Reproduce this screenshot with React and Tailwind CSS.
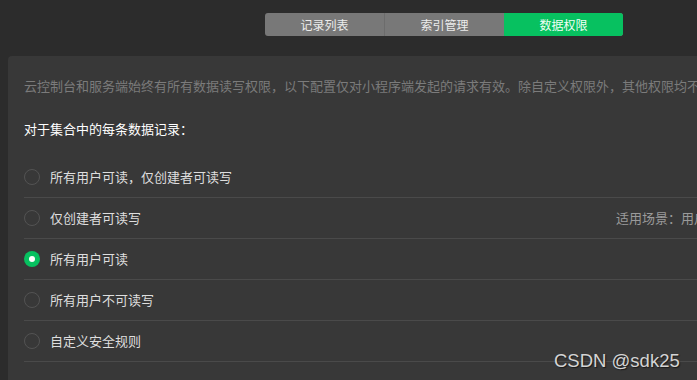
import React, { useState } from 'react';

const tabs = ['记录列表', '索引管理', '数据权限'];

const options = [
  { label: '所有用户可读，仅创建者可读写', hint: '' },
  { label: '仅创建者可读写', hint: '适用场景：用户个人设置、用户订单管理' },
  { label: '所有用户可读', hint: '' },
  { label: '所有用户不可读写', hint: '' },
  { label: '自定义安全规则', hint: '' },
];

const Radio = ({ checked }) =>
  checked ? (
    <span className="w-4 h-4 rounded-full bg-[#07c160] flex items-center justify-center">
      <span className="w-[6px] h-[6px] rounded-full bg-white"></span>
    </span>
  ) : (
    <span className="w-4 h-4 rounded-full border border-[#535353]"></span>
  );

const App = () => {
  const [activeTab, setActiveTab] = useState(2);
  const [selected, setSelected] = useState(2);

  return (
    <div
      className="relative w-[697px] h-[380px] overflow-hidden bg-[#2c2c2c]"
      style={{ fontFamily: '"Noto Sans CJK SC", "Liberation Sans", sans-serif' }}
    >
      {/* Tabs */}
      <div className="pt-[13px] pl-[265px] flex">
        <div className="flex w-[358px] h-[23px] rounded-[3px] overflow-hidden bg-[#787878]">
          {tabs.map((t, i) => (
            <button
              key={t}
              onClick={() => setActiveTab(i)}
              className={`flex-1 flex items-center justify-center text-[12px] leading-none ${
                i === activeTab ? 'bg-[#07c160] text-[#f0fff6]' : 'text-[#ececec]'
              } ${i === 1 ? 'border-l border-[#6c6c6c]' : ''}`}
            >
              {t}
            </button>
          ))}
        </div>
      </div>

      {/* Panel */}
      <div className="mt-[20px] ml-[8px] w-[1000px] h-[400px] bg-[#383838] rounded-tl-[4px] pl-4 pt-5">
        <p className="text-[13px] leading-5 text-[#7b7b7b] whitespace-nowrap">
          云控制台和服务端始终有所有数据读写权限，以下配置仅对小程序端发起的请求有效。除自定义权限外，其他权限均不会影响云控制台和服务端的读写。
        </p>
        <p className="mt-[23px] text-[13px] leading-5 text-white">对于集合中的每条数据记录：</p>

        <div className="mt-[18px]">
          {options.map((o, i) => (
            <div
              key={o.label}
              onClick={() => setSelected(i)}
              className="grid grid-cols-[26px_566px_1fr] items-center h-[41px] border-b border-[#4a4a4a] cursor-pointer"
            >
              <Radio checked={selected === i} />
              <span className="text-[13px] text-[#dedede] whitespace-nowrap">{o.label}</span>
              <span className="text-[13px] text-[#9a9a9a] whitespace-nowrap">{o.hint}</span>
            </div>
          ))}
        </div>
      </div>

      {/* Watermark */}
      <div
        className="absolute left-[554px] top-[349px] text-[18.5px] leading-6 text-[#d4d4d4] [text-shadow:1px_1px_1px_#1a1a1a]"
        style={{ fontFamily: '"Liberation Sans", Arial, sans-serif' }}
      >
        CSDN @sdk25
      </div>
    </div>
  );
};

export default App;
